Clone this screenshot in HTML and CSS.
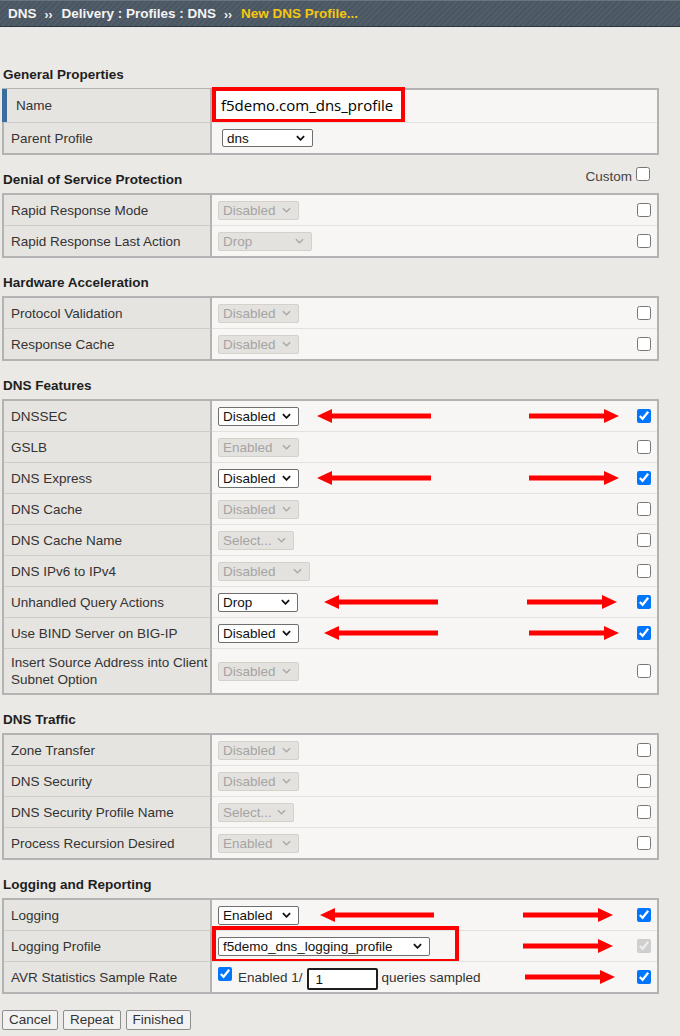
FILE: index.html
```html
<!DOCTYPE html>
<html>
<head>
<meta charset="utf-8">
<title>New DNS Profile</title>
<link rel="stylesheet" href="styles.css">
</head>
<body>
<div class="topbar">
  <span>DNS</span><span class="sep">››</span><span>Delivery : Profiles : DNS</span><span class="sep">››</span><span class="cur">New DNS Profile...</span>
</div>

<div class="content">
  <div class="sec-title"><span>General Properties</span></div>
  <div class="tbl">
    <div class="row tall">
      <div class="lbl marked">Name</div>
      <div class="val">
        <div class="namebox">f5demo.com_dns_profile</div>
      </div>
    </div>
    <div class="row">
      <div class="lbl">Parent Profile</div>
      <div class="val pad10">
        <div class="sel w91">dns<svg class="chev" viewBox="0 0 10 6"><polyline points="1,1 5,5 9,1"/></svg></div>
      </div>
    </div>
  </div>

  <div class="sec-title"><span>Denial of Service Protection</span>
    <span class="custom">Custom<input type="checkbox" class="cb"></span>
  </div>
  <div class="tbl">
    <div class="row">
      <div class="lbl">Rapid Response Mode</div>
      <div class="val"><div class="sel dis w81">Disabled<svg class="chev" viewBox="0 0 10 6"><polyline points="1,1 5,5 9,1"/></svg></div><input type="checkbox" class="cb end"></div>
    </div>
    <div class="row">
      <div class="lbl">Rapid Response Last Action</div>
      <div class="val"><div class="sel dis w94">Drop<svg class="chev" viewBox="0 0 10 6"><polyline points="1,1 5,5 9,1"/></svg></div><input type="checkbox" class="cb end"></div>
    </div>
  </div>

  <div class="sec-title"><span>Hardware Acceleration</span></div>
  <div class="tbl">
    <div class="row">
      <div class="lbl">Protocol Validation</div>
      <div class="val"><div class="sel dis w81">Disabled<svg class="chev" viewBox="0 0 10 6"><polyline points="1,1 5,5 9,1"/></svg></div><input type="checkbox" class="cb end"></div>
    </div>
    <div class="row">
      <div class="lbl">Response Cache</div>
      <div class="val"><div class="sel dis w81">Disabled<svg class="chev" viewBox="0 0 10 6"><polyline points="1,1 5,5 9,1"/></svg></div><input type="checkbox" class="cb end"></div>
    </div>
  </div>

  <div class="sec-title"><span>DNS Features</span></div>
  <div class="tbl">
    <div class="row">
      <div class="lbl">DNSSEC</div>
      <div class="val"><div class="sel w81">Disabled<svg class="chev" viewBox="0 0 10 6"><polyline points="1,1 5,5 9,1"/></svg></div>
        <svg class="arr-l ml18" viewBox="0 0 114 14"><polygon points="0,7 15,0 15,4.5 114,4.5 114,9.5 15,9.5 15,14"/></svg>
        <svg class="arr-r mr18" viewBox="0 0 90 14"><polygon points="90,7 75,0 75,4.5 0,4.5 0,9.5 75,9.5 75,14"/></svg>
        <input type="checkbox" class="cb" checked></div>
    </div>
    <div class="row">
      <div class="lbl">GSLB</div>
      <div class="val"><div class="sel dis w81">Enabled<svg class="chev" viewBox="0 0 10 6"><polyline points="1,1 5,5 9,1"/></svg></div><input type="checkbox" class="cb end"></div>
    </div>
    <div class="row">
      <div class="lbl">DNS Express</div>
      <div class="val"><div class="sel w81">Disabled<svg class="chev" viewBox="0 0 10 6"><polyline points="1,1 5,5 9,1"/></svg></div>
        <svg class="arr-l ml18" viewBox="0 0 114 14"><polygon points="0,7 15,0 15,4.5 114,4.5 114,9.5 15,9.5 15,14"/></svg>
        <svg class="arr-r mr18" viewBox="0 0 90 14"><polygon points="90,7 75,0 75,4.5 0,4.5 0,9.5 75,9.5 75,14"/></svg>
        <input type="checkbox" class="cb" checked></div>
    </div>
    <div class="row">
      <div class="lbl">DNS Cache</div>
      <div class="val"><div class="sel dis w81">Disabled<svg class="chev" viewBox="0 0 10 6"><polyline points="1,1 5,5 9,1"/></svg></div><input type="checkbox" class="cb end"></div>
    </div>
    <div class="row">
      <div class="lbl">DNS Cache Name</div>
      <div class="val"><div class="sel dis w76">Select...<svg class="chev" viewBox="0 0 10 6"><polyline points="1,1 5,5 9,1"/></svg></div><input type="checkbox" class="cb end"></div>
    </div>
    <div class="row">
      <div class="lbl">DNS IPv6 to IPv4</div>
      <div class="val"><div class="sel dis w92">Disabled<svg class="chev" viewBox="0 0 10 6"><polyline points="1,1 5,5 9,1"/></svg></div><input type="checkbox" class="cb end"></div>
    </div>
    <div class="row">
      <div class="lbl">Unhandled Query Actions</div>
      <div class="val"><div class="sel w80">Drop<svg class="chev" viewBox="0 0 10 6"><polyline points="1,1 5,5 9,1"/></svg></div>
        <svg class="arr-l ml26" viewBox="0 0 114 14"><polygon points="0,7 15,0 15,4.5 114,4.5 114,9.5 15,9.5 15,14"/></svg>
        <svg class="arr-r mr20" viewBox="0 0 90 14"><polygon points="90,7 75,0 75,4.5 0,4.5 0,9.5 75,9.5 75,14"/></svg>
        <input type="checkbox" class="cb" checked></div>
    </div>
    <div class="row">
      <div class="lbl">Use BIND Server on BIG-IP</div>
      <div class="val"><div class="sel w81">Disabled<svg class="chev" viewBox="0 0 10 6"><polyline points="1,1 5,5 9,1"/></svg></div>
        <svg class="arr-l ml25" viewBox="0 0 114 14"><polygon points="0,7 15,0 15,4.5 114,4.5 114,9.5 15,9.5 15,14"/></svg>
        <svg class="arr-r mr18" viewBox="0 0 90 14"><polygon points="90,7 75,0 75,4.5 0,4.5 0,9.5 75,9.5 75,14"/></svg>
        <input type="checkbox" class="cb" checked></div>
    </div>
    <div class="row double">
      <div class="lbl">Insert Source Address into Client<br>Subnet Option</div>
      <div class="val"><div class="sel dis w81">Disabled<svg class="chev" viewBox="0 0 10 6"><polyline points="1,1 5,5 9,1"/></svg></div><input type="checkbox" class="cb end"></div>
    </div>
  </div>

  <div class="sec-title"><span>DNS Traffic</span></div>
  <div class="tbl">
    <div class="row">
      <div class="lbl">Zone Transfer</div>
      <div class="val"><div class="sel dis w81">Disabled<svg class="chev" viewBox="0 0 10 6"><polyline points="1,1 5,5 9,1"/></svg></div><input type="checkbox" class="cb end"></div>
    </div>
    <div class="row">
      <div class="lbl">DNS Security</div>
      <div class="val"><div class="sel dis w81">Disabled<svg class="chev" viewBox="0 0 10 6"><polyline points="1,1 5,5 9,1"/></svg></div><input type="checkbox" class="cb end"></div>
    </div>
    <div class="row">
      <div class="lbl">DNS Security Profile Name</div>
      <div class="val"><div class="sel dis w76">Select...<svg class="chev" viewBox="0 0 10 6"><polyline points="1,1 5,5 9,1"/></svg></div><input type="checkbox" class="cb end"></div>
    </div>
    <div class="row">
      <div class="lbl">Process Recursion Desired</div>
      <div class="val"><div class="sel dis w81">Enabled<svg class="chev" viewBox="0 0 10 6"><polyline points="1,1 5,5 9,1"/></svg></div><input type="checkbox" class="cb end"></div>
    </div>
  </div>

  <div class="sec-title"><span>Logging and Reporting</span></div>
  <div class="tbl">
    <div class="row">
      <div class="lbl">Logging</div>
      <div class="val"><div class="sel w81">Enabled<svg class="chev" viewBox="0 0 10 6"><polyline points="1,1 5,5 9,1"/></svg></div>
        <svg class="arr-l ml21" viewBox="0 0 114 14"><polygon points="0,7 15,0 15,4.5 114,4.5 114,9.5 15,9.5 15,14"/></svg>
        <svg class="arr-r mr24" viewBox="0 0 90 14"><polygon points="90,7 75,0 75,4.5 0,4.5 0,9.5 75,9.5 75,14"/></svg>
        <input type="checkbox" class="cb" checked></div>
    </div>
    <div class="row">
      <div class="lbl">Logging Profile</div>
      <div class="val">
        <div class="sel w212">f5demo_dns_logging_profile<svg class="chev" viewBox="0 0 10 6"><polyline points="1,1 5,5 9,1"/></svg></div>
        <div class="redframe"></div>
        <svg class="arr-r auto mr24" viewBox="0 0 90 14"><polygon points="90,7 75,0 75,4.5 0,4.5 0,9.5 75,9.5 75,14"/></svg>
        <input type="checkbox" class="cb" checked disabled></div>
    </div>
    <div class="row">
      <div class="lbl">AVR Statistics Sample Rate</div>
      <div class="val">
        <input type="checkbox" class="cb lead" checked>
        <span class="txt">Enabled 1/</span>
        <div class="numbox">1</div>
        <span class="txt">queries sampled</span>
        <svg class="arr-r auto mr22" viewBox="0 0 90 14"><polygon points="90,7 75,0 75,4.5 0,4.5 0,9.5 75,9.5 75,14"/></svg>
        <input type="checkbox" class="cb" checked></div>
    </div>
  </div>

  <div class="buttons">
    <button class="btn">Cancel</button>
    <button class="btn">Repeat</button>
    <button class="btn">Finished</button>
  </div>
</div>
</body>
</html>
```

FILE: styles.css
```css
* { box-sizing: border-box; }

body {
  margin: 0;
  background: #ebe9e5;
  font-family: "Liberation Sans", Arial, sans-serif;
  font-size: 13.5px;
  color: #333;
}

.topbar {
  height: 27px;
  background: repeating-linear-gradient(135deg, #4b5663 0 2px, #525d6a 2px 4px);
  border-top: 1px solid #6a737e;
  border-bottom: 1px solid #2d343c;
  display: flex;
  align-items: center;
  padding-left: 8px;
  color: #f4f4f4;
  font-weight: bold;
  white-space: nowrap;
}
.topbar .sep {
  font-size: 12px;
  margin: 2px 9px 0 8px;
}
.topbar .cur { color: #f3c80f; }

.content {
  padding: 23px 0 0 2px;
  width: 661px;
}

.sec-title {
  height: 38px;
  padding: 17px 11px 0 1px;
  line-height: 15px;
  font-weight: bold;
  color: #1e1e1e;
  display: flex;
  justify-content: space-between;
  align-items: flex-start;
}
.custom {
  display: flex;
  align-items: flex-start;
  font-weight: normal;
  color: #444;
  margin-top: -3px;
}
.custom .cb { margin: -2px 0 0 4px; }

.tbl {
  width: 657px;
  border: 2px solid #b3b3b3;
}
.row {
  display: grid;
  grid-template-columns: 208px 1fr;
}
.lbl {
  background: #e6e4e0;
  border-right: 2px solid #b3b3b3;
  height: 30px;
  padding-left: 7px;
  display: flex;
  align-items: center;
  color: #333;
  line-height: 17px;
}
.val {
  background: #f7f6f4;
  height: 30px;
  display: flex;
  align-items: center;
  padding: 0 6px;
  position: relative;
}
.row + .row .lbl { border-top: 1px solid #cfccc8; height: 31px; }
.row + .row .val { border-top: 1px solid #e3e1dd; height: 31px; }
.row.tall .lbl, .row.tall .val { height: 32px; }
.row.double .lbl, .row.double .val { height: 45px; }

.lbl.marked {
  padding-left: 12px;
  box-shadow: inset 5px 0 0 #3b6c9e;
  margin-left: -2px;
  margin-top: -1px;
  height: 33px !important;
  padding-left: 14px;
}
.val.pad10 { padding-left: 10px; }

.namebox {
  position: absolute;
  left: 0;
  top: -3px;
  width: 193px;
  height: 36px;
  border: 4px solid #ff0000;
  background: #ffffff;
  font-family: "Open Sans", "Noto Sans", sans-serif;
  font-size: 15px;
  color: #000;
  padding-left: 5px;
  display: flex;
  align-items: center;
}

.sel {
  flex: none;
  height: 19px;
  border: 1px solid #6f6f6f;
  border-radius: 2px;
  background: #fff;
  color: #111;
  padding-left: 4px;
  display: flex;
  align-items: center;
  white-space: nowrap;
}
.sel .chev {
  width: 9px;
  height: 6px;
  margin-left: auto;
  margin-right: 7px;
  fill: none;
  stroke: #111;
  stroke-width: 2;
}
.sel.dis {
  background: #e4e2de;
  border-color: #d4d1cd;
  color: #a4a4a4;
}
.sel.dis .chev { stroke: #a8a8a8; stroke-width: 1.5; }

.w76 { width: 76px; }
.w80 { width: 80px; }
.w81 { width: 81px; }
.w91 { width: 91px; height: 18px; }
.w92 { width: 92px; }
.w94 { width: 94px; }
.w212 { width: 212px; }

.cb {
  width: 14px;
  height: 14px;
  margin: 0;
  flex: none;
}
.cb.end { margin-left: auto; }
.cb.lead { margin: 0 6px 6px 0; }

.arr-l, .arr-r { flex: none; height: 14px; fill: #ff0000; }
.arr-l { width: 114px; }
.arr-r { width: 90px; margin-left: auto; }
.ml18 { margin-left: 18px; }
.ml21 { margin-left: 21px; }
.ml25 { margin-left: 25px; }
.ml26 { margin-left: 26px; }
.mr18 { margin-right: 18px; }
.mr20 { margin-right: 20px; }
.mr22 { margin-right: 22px; }
.mr24 { margin-right: 24px; }

.redframe {
  position: absolute;
  left: 0;
  top: -5px;
  width: 247px;
  height: 37px;
  border: 4px solid #ff0000;
  pointer-events: none;
}

.txt { color: #333; white-space: nowrap; }
.numbox {
  width: 71px;
  height: 22px;
  margin: 4px 4px 0 4px;
  border: 2px solid #1e1e1e;
  border-radius: 2px;
  background: #fff;
  color: #111;
  padding-left: 7px;
  display: flex;
  align-items: center;
  flex: none;
}

.buttons {
  display: flex;
  gap: 5px;
  margin-top: 16px;
}
.btn {
  height: 20px;
  padding: 0 6px;
  font-family: "Liberation Sans", Arial, sans-serif;
  font-size: 13.5px;
  color: #333;
  background: #f2f2f2;
  border: 1px solid #8e8e8e;
  border-radius: 2px;
  line-height: 18px;
}
```
